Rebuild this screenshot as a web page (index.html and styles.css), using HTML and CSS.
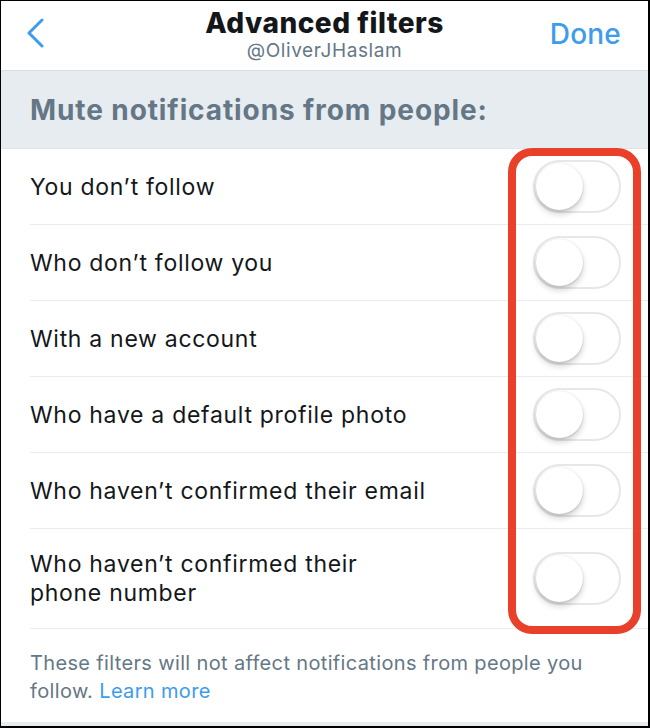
FILE: index.html
```html
<!DOCTYPE html>
<html>
<head>
<meta charset="utf-8">
<link rel="stylesheet" href="styles.css">
</head>
<body>
<div class="frame">
  <header class="nav">
    <div class="left">
      <svg class="back" width="20" height="32" viewBox="0 0 20 32"><polyline points="15,3 2,16 15,29" fill="none" stroke="#3d9cec" stroke-width="3" stroke-linecap="round" stroke-linejoin="round"/></svg>
    </div>
    <div class="titles">
      <div class="title">Advanced filters</div>
      <div class="subtitle">@OliverJHaslam</div>
    </div>
    <div class="right">
      <span class="done">Done</span>
    </div>
  </header>
  <div class="section">Mute notifications from people:</div>
  <div class="list">
    <div class="row"><span class="label">You don’t follow</span><span class="toggle"><span class="knob"></span></span></div>
    <div class="row"><span class="label">Who don’t follow you</span><span class="toggle"><span class="knob"></span></span></div>
    <div class="row"><span class="label">With a new account</span><span class="toggle"><span class="knob"></span></span></div>
    <div class="row"><span class="label">Who have a default profile photo</span><span class="toggle"><span class="knob"></span></span></div>
    <div class="row"><span class="label">Who haven’t confirmed their email</span><span class="toggle"><span class="knob"></span></span></div>
    <div class="row tall"><span class="label">Who haven’t confirmed their<br>phone number</span><span class="toggle"><span class="knob"></span></span></div>
  </div>
  <p class="footer">These filters will not affect notifications from people you<br>follow. <span class="link">Learn more</span></p>
  <div class="bottom"></div>
  <div class="highlight"></div>
</div>
</body>
</html>
```
FILE: styles.css
```css
* { box-sizing: border-box; }
html, body { margin: 0; padding: 0; background: #fff; }
body { font-family: Inter, "Noto Sans", sans-serif; color: #14171a; }
.frame {
  position: relative;
  width: 650px;
  height: 728px;
  border-style: solid;
  border-color: #000;
  border-width: 1px 2px 2px 1px;
  overflow: hidden;
  display: flex;
  flex-direction: column;
}
.nav {
  height: 70px;
  display: grid;
  grid-template-columns: 1fr auto 1fr;
  align-items: start;
  border-bottom: 1px solid #d8dde1;
  flex: none;
}
.left { display: flex; }
.back { margin: 16px 0 0 26px; }
.right { display: flex; justify-content: flex-end; }
.titles {
  text-align: center;
  padding-top: 6px;
}
.title { font-size: 28px; font-weight: 800; line-height: 33px; letter-spacing: 0.5px; }
.subtitle { font-size: 19px; color: #657786; line-height: 22px; margin-top: 0; letter-spacing: 0.6px; }
.done { font-size: 28px; color: #3d9cec; font-weight: 500; margin: 16px 27px 0 0; letter-spacing: 0.2px; }
.section {
  height: 78px;
  flex: none;
  background: #e6ecf0;
  color: #657786;
  font-size: 28px;
  font-weight: 700;
  letter-spacing: 0.9px;
  padding-left: 29px;
  display: flex;
  align-items: center;
  border-bottom: 1px solid #dfe4e8;
}
.list { padding-left: 29px; flex: none; }
.row {
  height: 76px;
  display: flex;
  align-items: center;
  justify-content: space-between;
  border-bottom: 1px solid #e6ecf0;
  padding-right: 27px;
}
.row.tall { height: 100px; }
.label { font-size: 23px; line-height: 29px; letter-spacing: 0.7px; padding-top: 1px; }
.toggle {
  width: 88px;
  height: 53px;
  border-radius: 27px;
  border: 2px solid #e7e7e7;
  position: relative;
  background: #fff;
  flex: none;
}
.knob {
  position: absolute;
  left: 1px;
  top: 1px;
  width: 47px;
  height: 47px;
  border-radius: 50%;
  background: #fff;
  box-shadow: 0 4px 6px rgba(0,0,0,0.18), 0 1px 2px rgba(0,0,0,0.12), 0 0 0 0.5px rgba(0,0,0,0.05);
}
.footer {
  margin: 20px 0 0 0;
  padding: 0 20px 0 29px;
  font-size: 20px;
  line-height: 28px;
  letter-spacing: 0.35px;
  color: #657786;
}
.link { color: #3d9cec; }
.bottom { margin-top: auto; height: 4px; background: #e6ecf0; flex: none; }
.highlight {
  position: absolute;
  left: 507px;
  top: 147px;
  width: 133px;
  height: 486px;
  border: 8px solid #e8402a;
  border-radius: 24px;
}
```
